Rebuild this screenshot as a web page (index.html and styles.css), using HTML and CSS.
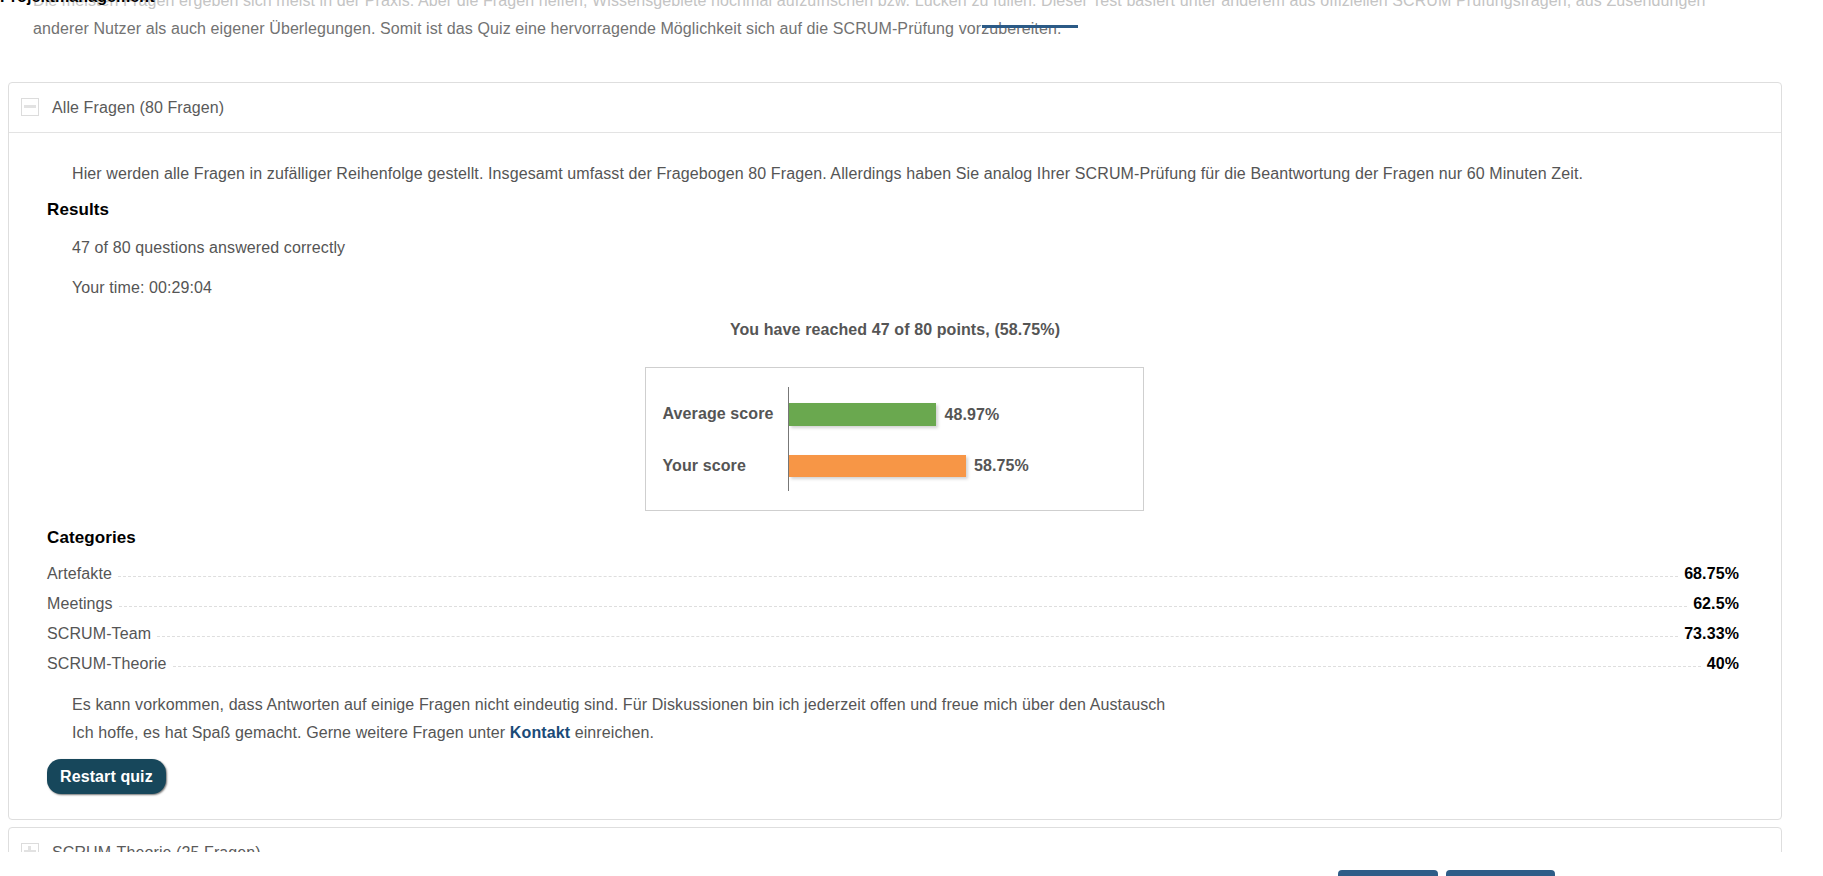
FILE: index.html
```html
<!DOCTYPE html>
<html lang="de">
<head>
<meta charset="utf-8">
<title>SCRUM Quiz</title>
<link rel="stylesheet" href="styles.css">
</head>
<body>
<div class="page">
  <div class="viewport">
    <div class="intro">
      <div class="intro-line faded">Die meisten Fragen ergeben sich meist in der Praxis. Aber die Fragen helfen, Wissensgebiete nochmal aufzufrischen bzw. Lücken zu füllen. Dieser Test basiert unter anderem aus offiziellen SCRUM Prüfungsfragen, aus Zusendungen</div>
      <div class="intro-line">anderer Nutzer als auch eigener Überlegungen. Somit ist das Quiz eine hervorragende Möglichkeit sich auf die SCRUM-Prüfung vorzubereiten.</div>
    </div>

    <section class="panel">
      <div class="panel-head">
        <span class="toggle minus"></span>
        <span class="panel-title">Alle Fragen (80 Fragen)</span>
      </div>
      <div class="panel-body">
        <p class="text intro-q">Hier werden alle Fragen in zufälliger Reihenfolge gestellt. Insgesamt umfasst der Fragebogen 80 Fragen. Allerdings haben Sie analog Ihrer SCRUM-Prüfung für die Beantwortung der Fragen nur 60 Minuten Zeit.</p>
        <h3 class="heading results-h">Results</h3>
        <p class="text correct">47 of 80 questions answered correctly</p>
        <p class="text time">Your time: 00:29:04</p>
        <p class="reached">You have reached 47 of 80 points, (58.75%)</p>

        <div class="chart">
          <div class="chart-labels">
            <div class="chart-row r1">Average score</div>
            <div class="chart-row r2">Your score</div>
          </div>
          <div class="chart-plot">
            <div class="chart-row r1"><span class="bar avg" style="width:147.9px"></span><span class="bar-value">48.97%</span></div>
            <div class="chart-row r2"><span class="bar you" style="width:177.4px"></span><span class="bar-value">58.75%</span></div>
          </div>
        </div>

        <h3 class="heading categories-h">Categories</h3>
        <div class="categories">
          <div class="cat-row"><span class="cat-name">Artefakte</span><span class="dots"></span><span class="cat-value">68.75%</span></div>
          <div class="cat-row"><span class="cat-name">Meetings</span><span class="dots"></span><span class="cat-value">62.5%</span></div>
          <div class="cat-row"><span class="cat-name">SCRUM-Team</span><span class="dots"></span><span class="cat-value">73.33%</span></div>
          <div class="cat-row"><span class="cat-name">SCRUM-Theorie</span><span class="dots"></span><span class="cat-value">40%</span></div>
        </div>

        <div class="closing">
          <p class="text">Es kann vorkommen, dass Antworten auf einige Fragen nicht eindeutig sind. Für Diskussionen bin ich jederzeit offen und freue mich über den Austausch</p>
          <p class="text">Ich hoffe, es hat Spaß gemacht. Gerne weitere Fragen unter <a class="link" href="#">Kontakt</a> einreichen.</p>
        </div>

        <button class="restart" type="button">Restart quiz</button>
      </div>
    </section>

    <section class="panel second">
      <div class="panel-head">
        <span class="toggle plus"></span>
        <span class="panel-title">SCRUM-Theorie (25 Fragen)</span>
      </div>
    </section>
  </div>

  <div class="pager">
    <button class="pager-btn prev" type="button"></button>
    <button class="pager-btn next" type="button"></button>
  </div>

  <div class="site-title">Projektmanagement</div>
  <div class="nav-underline"></div>
</div>
</body>
</html>
```

FILE: styles.css
```css
html, body {
  margin: 0;
  padding: 0;
  overflow: hidden;
  background: #fff;
}

body {
  font-family: "Liberation Sans", Arial, sans-serif;
  font-size: 16px;
  letter-spacing: 0.1px;
  color: #555;
}

.page {
  position: relative;
  width: 1823px;
}

.viewport {
  height: 852px;
  overflow: hidden;
}

/* intro text (scrolled partially out of view) */
.intro {
  margin-top: -13px;
  padding-left: 33px;
  line-height: 28px;
  white-space: nowrap;
}

.intro-line {
  color: #727272;
}

.intro-line.faded {
  color: #c4c4c4;
}

/* accordion panels */
.panel {
  margin: 39px 41px 0 8px;
  border: 1px solid #dedede;
  border-radius: 4px;
  background: #fff;
}

.panel.second {
  margin-top: 7px;
}

.panel-head {
  display: flex;
  align-items: center;
  height: 49px;
  padding-left: 12px;
  border-bottom: 1px solid #e3e3e3;
}

.panel.second .panel-head {
  border-bottom: none;
}

.toggle {
  position: relative;
  box-sizing: border-box;
  width: 18px;
  height: 18px;
  border: 1px solid #dcdcdc;
  margin-right: 13px;
  margin-top: -1px;
}

.toggle::before {
  content: "";
  position: absolute;
  left: 2px;
  right: 2px;
  top: 6px;
  height: 3px;
  background: #e2e2e2;
}

.toggle.plus::after {
  content: "";
  position: absolute;
  top: 2px;
  bottom: 2px;
  left: 6px;
  width: 3px;
  background: #e2e2e2;
}

.panel-title {
  color: #5a5a5a;
  font-size: 16px;
}

.panel-body {
  padding: 29px 42px 25px 38px;
}

.text {
  margin: 0;
  padding-left: 25px;
  line-height: 24px;
  color: #555;
}

.heading {
  margin: 0;
  font-size: 17px;
  line-height: 24px;
  font-weight: bold;
  color: #000;
}

.results-h {
  margin-top: 12px;
}

.correct {
  margin-top: 14px;
}

.time {
  margin-top: 16px;
}

.reached {
  margin: 18px 0 0;
  line-height: 24px;
  text-align: center;
  font-weight: bold;
  color: #555;
  padding-left: 4px;
}

/* chart */
.chart {
  display: flex;
  box-sizing: border-box;
  width: 499px;
  height: 144px;
  margin: 25px auto 0;
  padding: 19px 0 19px 17px;
  border: 1px solid #cfcfcf;
  position: relative;
  left: 1px;
}

.chart-labels {
  width: 125px;
  font-weight: bold;
  color: #555;
}

.chart-plot {
  flex: 1;
  border-left: 1px solid #777;
}

.chart-row {
  display: flex;
  align-items: center;
  white-space: nowrap;
}

.chart-row.r1 {
  height: 53px;
}

.chart-row.r2 {
  height: 51px;
}

.chart-plot .chart-row.r1 {
  padding-top: 2px;
  box-sizing: border-box;
}

.bar {
  display: block;
  box-shadow: 2px 2px 3px rgba(0, 0, 0, 0.18);
}

.bar.avg {
  height: 23px;
  background: #6aa84f;
}

.bar.you {
  height: 22px;
  background: #f79646;
}

.bar-value {
  margin-left: 8px;
  font-weight: bold;
  color: #555;
}

.categories-h {
  margin-top: 15px;
}

/* categories */
.categories {
  margin-top: 9px;
}

.cat-row {
  display: flex;
  height: 30px;
  line-height: 30px;
}

.cat-name {
  color: #555;
}

.dots {
  flex: 1;
  margin: 0 6px 12px 6px;
  border-bottom: 1px dashed #dedede;
}

.cat-value {
  font-weight: bold;
  color: #000;
}

.closing {
  margin-top: 12px;
}

.closing .text {
  line-height: 28px;
}

.link {
  color: #1b4b78;
  font-weight: bold;
  text-decoration: none;
}

.restart {
  display: block;
  margin-top: 12px;
  height: 35px;
  padding: 0 13px;
  border: none;
  border-radius: 14px;
  background: #17475b;
  color: #fff;
  font-family: "Liberation Sans", Arial, sans-serif;
  font-size: 16px;
  letter-spacing: 0.1px;
  font-weight: bold;
  box-shadow: 1px 1px 2px rgba(0, 0, 0, 0.55);
}

/* pager buttons peeking at the bottom */
.pager {
  display: flex;
  gap: 8px;
  margin-top: 18px;
  padding-left: 1338px;
}

.pager-btn {
  height: 34px;
  border: none;
  border-radius: 4px 4px 0 0;
  background: #2e5d88;
}

.pager-btn.prev {
  width: 100px;
}

.pager-btn.next {
  width: 109px;
}

/* overlays */
.site-title {
  position: absolute;
  left: 0;
  top: -11px;
  font-size: 16px;
  line-height: 16px;
  font-weight: bold;
  color: #000;
  white-space: nowrap;
}

.nav-underline {
  position: absolute;
  left: 982px;
  top: 25px;
  width: 96px;
  height: 3px;
  background: #2b5a86;
}
```
